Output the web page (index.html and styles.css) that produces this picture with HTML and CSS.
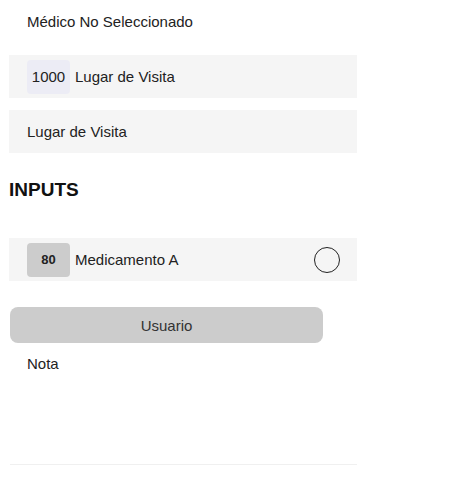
FILE: index.html
```html
<!DOCTYPE html>
<html lang="es">
<head>
<meta charset="utf-8">
<link rel="stylesheet" href="styles.css">
</head>
<body>
<div class="screen">
  <div class="row plain"><span class="label">Médico No Seleccionado</span></div>
  <div class="row shaded gap"><span class="badge light">1000</span><span class="label">Lugar de Visita</span></div>
  <div class="row shaded gap"><span class="label">Lugar de Visita</span></div>
  <h2 class="heading">INPUTS</h2>
  <div class="row shaded item"><span class="badge dark">80</span><span class="label grow">Medicamento A</span><span class="radio"></span></div>
  <div class="button">Usuario</div>
  <div class="note"><span class="label">Nota</span></div>
</div>
</body>
</html>
```

FILE: styles.css
```css
html, body {
  margin: 0;
  padding: 0;
  background: #ffffff;
}
body {
  font-family: "Liberation Sans", Arial, sans-serif;
  font-size: 15px;
  color: #222222;
}
.screen {
  width: 348px;
  padding-left: 9px;
  display: flex;
  flex-direction: column;
}
.row {
  height: 43px;
  display: flex;
  align-items: center;
  padding: 0 17px 0 18px;
  box-sizing: border-box;
}
.shaded {
  background: #f5f5f5;
}
.gap {
  margin-top: 12px;
}
.label {
  line-height: 17px;
}
.grow {
  flex: 1;
}
.badge {
  width: 43px;
  height: 34px;
  border-radius: 4px;
  display: flex;
  align-items: center;
  justify-content: center;
  margin-right: 5px;
}
.badge.light {
  background: #ececf5;
}
.badge.dark {
  background: #cccccc;
  font-weight: bold;
  font-size: 13px;
}
.heading {
  margin: 26px 0 0 0;
  font-size: 19px;
  line-height: 22px;
  font-weight: bold;
  color: #111111;
}
.item {
  margin-top: 37px;
}
.radio {
  width: 24px;
  height: 24px;
  border: 1.5px solid #222222;
  border-radius: 50%;
}
.button {
  margin: 26px 0 0 1px;
  width: 313px;
  height: 36px;
  border-radius: 8px;
  background: #cccccc;
  display: flex;
  align-items: center;
  justify-content: center;
  color: #333333;
}
.note {
  margin: 12px 0 0 1px;
  height: 109px;
  padding-left: 17px;
  border-bottom: 1px solid #f0f0f0;
}
```
